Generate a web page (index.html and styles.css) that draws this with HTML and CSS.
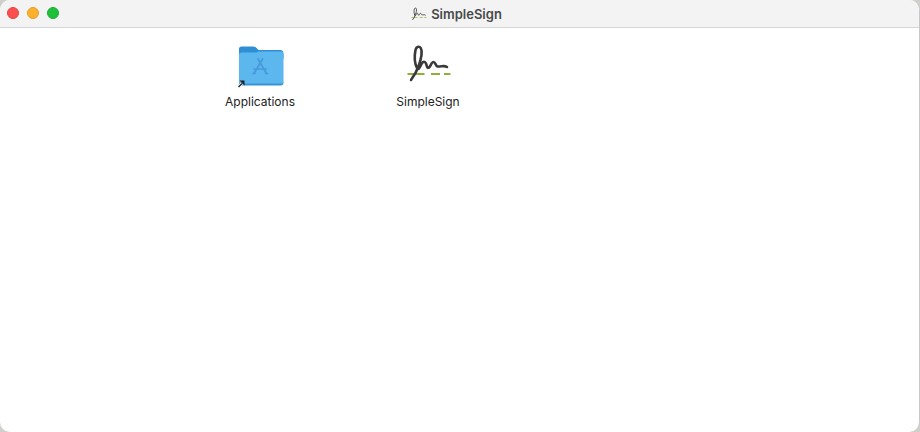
FILE: index.html
```html
<!DOCTYPE html>
<html lang="en">
<head>
<meta charset="utf-8">
<title>SimpleSign</title>
<link rel="stylesheet" href="styles.css">
</head>
<body>
<div class="window">
  <header class="titlebar">
    <div class="lights">
      <span class="light red"></span>
      <span class="light yellow"></span>
      <span class="light green"></span>
    </div>
    <div class="title">
      <svg class="title-icon" width="16" height="14" viewBox="2 0 46 38">
        <path d="M3.500 29H20.500M27 29H36M40 29H46.500" fill="none" stroke="#8fae3a" stroke-width="2"/>
        <path d="M7 35C10 31 13 26 15 20C17 14 19 8 17 3.500C16 1 12.500 1 11.500 5C10.500 10 10.500 18 13 23C14.500 25.500 16 22 17.500 19C19 16 21 16 22 18.500C23 21 23 23.500 25 22.500C26.500 21.500 27.500 17 29.500 17C31.500 17 31.500 21 33.500 21.500C37 22 40 20 43 22" fill="none" stroke="#444" stroke-width="2.600" stroke-linecap="round" stroke-linejoin="round"/>
      </svg>
      <span>SimpleSign</span>
    </div>
  </header>
  <main class="canvas">
    <div class="item">
      <svg class="icon" width="48" height="44" viewBox="0 0 48 44">
        <path d="M3 4Q3 1.500 5.500 1.500H17Q19 1.500 20.500 3L22.500 5H44Q47.500 5 47.500 8.500V14H3Z" fill="#2f8fd2"/>
        <path d="M3 10Q3 7.500 5.500 7.500H19Q21 7.500 23 6.500H44.500Q47.500 6.500 47.500 9.500V37Q47.500 39.500 44.500 39.500H6Q3 39.500 3 37Z" fill="#5db7ef"/>
        <path d="M3 36.500Q3 38.500 6 38.500H44.500Q47.500 38.500 47.500 36.500V37.500Q47.500 40.500 44.500 40.500H6Q3 40.500 3 37.500Z" fill="#3593d6"/>
        <path d="M26.500 14L18 28.500M22 14L30.500 28.500M18 24H30.500M17 28.500H19M29.500 28.500H31.500" fill="none" stroke="#4699da" stroke-width="1.700" stroke-linecap="round"/>
        <path d="M2 42.500L6 38.500" stroke="#fff" stroke-width="2.600"/>
        <path d="M2.500 42L6 38.500" stroke="#222" stroke-width="1.400"/>
        <path d="M3.500 35.500H8.500V40.500Z" fill="#222"/>
      </svg>
      <span class="label">Applications</span>
    </div>
    <div class="item">
      <svg class="icon" width="48" height="44" viewBox="0 0 48 44">
        <path d="M3.500 29H20.500M27 29H36M40 29H46.500" fill="none" stroke="#8fae3a" stroke-width="2"/>
        <path d="M7 35C10 31 13 26 15 20C17 14 19 8 17 3.500C16 1 12.500 1 11.500 5C10.500 10 10.500 18 13 23C14.500 25.500 16 22 17.500 19C19 16 21 16 22 18.500C23 21 23 23.500 25 22.500C26.500 21.500 27.500 17 29.500 17C31.500 17 31.500 21 33.500 21.500C37 22 40 20 43 22" fill="none" stroke="#3a3a3a" stroke-width="2.600" stroke-linecap="round" stroke-linejoin="round"/>
      </svg>
      <span class="label">SimpleSign</span>
    </div>
  </main>
</div>
</body>
</html>
```

FILE: styles.css
```css
html, body {
  margin: 0;
  padding: 0;
  height: 100%;
  background: #cfcfcb;
}

body {
  width: 920px;
  height: 432px;
  overflow: hidden;
}

.window {
  box-sizing: border-box;
  width: 920px;
  height: 432px;
  display: flex;
  flex-direction: column;
  background: #fff;
  border-radius: 10px;
  border-right: 1px solid #c8c8c8;
  overflow: hidden;
  font-family: Inter, "Liberation Sans", sans-serif;
}

.titlebar {
  position: relative;
  flex: none;
  height: 27px;
  display: flex;
  align-items: center;
  justify-content: center;
  background: #f3f3f3;
  border-bottom: 1px solid #d6d6d6;
}

.lights {
  position: absolute;
  left: 7px;
  top: 7px;
  display: flex;
  gap: 8px;
}

.light {
  width: 12px;
  height: 12px;
  border-radius: 50%;
  box-sizing: border-box;
}

.red { background: #fd4f50; border: 1px solid #e0443f; }
.yellow { background: #fdb02e; border: 1px solid #e09e2a; }
.green { background: #1fc13b; border: 1px solid #1bab35; }

.title {
  display: flex;
  align-items: center;
  gap: 4px;
  padding-right: 6px;
  font-size: 13px;
  font-weight: 600;
  color: #4a4a4a;
}

.canvas {
  flex: 1;
  display: flex;
  align-items: flex-start;
  padding: 17px 0 0 190px;
}

.item {
  width: 140px;
  margin-right: 28px;
  display: flex;
  flex-direction: column;
  align-items: center;
}

.icon {
  display: block;
}

.label {
  margin-top: 5px;
  font-size: 12px;
  line-height: 15px;
  color: #222;
}
```
